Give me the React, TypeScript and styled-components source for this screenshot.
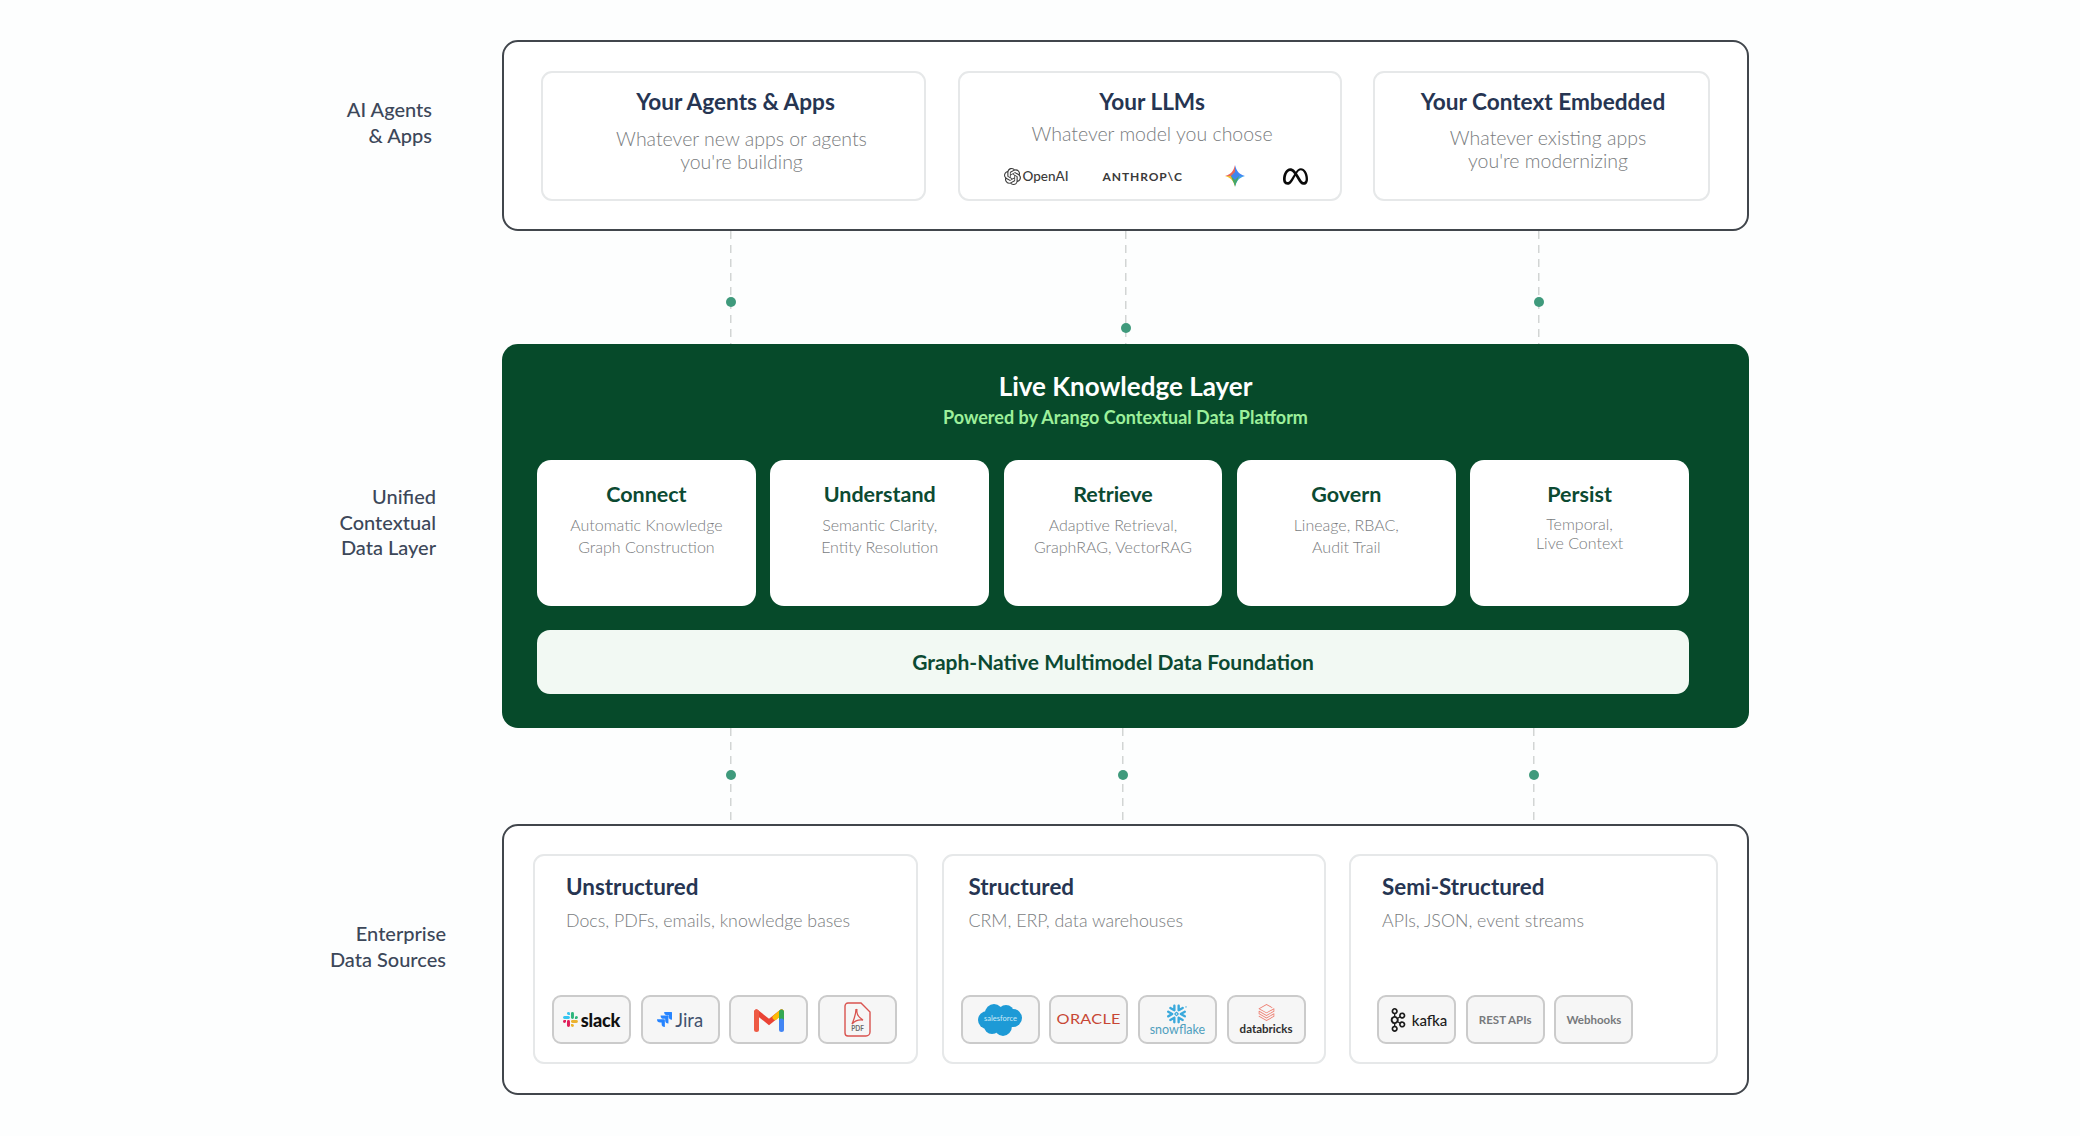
import { FC, ReactNode } from 'react'

import { SiApachekafka, SiDatabricks, SiJira, SiMeta, SiOpenai, SiSnowflake } from 'react-icons/si'
import styled, { createGlobalStyle } from 'styled-components'

const GlobalStyle = createGlobalStyle`
	html, body {
		margin: 0;
		padding: 0;
		background: #fdfefe;
		font-family: 'Lato', 'Noto Sans', sans-serif;
	}

	* {
		box-sizing: border-box;
	}
`

const Page = styled.div`
	width: 2080px;
	height: 1136px;
	padding-top: 40px;
	overflow: hidden;
`

const Tier = styled.div`
	display: flex;
`

const TierLabel = styled.div<{ $right: number; $top: number }>`
	width: 502px;
	padding-right: ${({ $right }) => $right}px;
	padding-top: ${({ $top }) => $top}px;
	text-align: right;
	color: #3c4759;
	font-size: 20px;
	font-weight: 500;
	line-height: 25.5px;
`

const OutlinePanel = styled.div<{ $height: number }>`
	width: 1247px;
	height: ${({ $height }) => $height}px;
	border: 2px solid #41464c;
	border-radius: 16px;
	background: #fff;
	display: grid;
`

const TopPanel = styled(OutlinePanel)`
	grid-template-columns: 385px 384px 337px;
	column-gap: 31.5px;
	padding: 29px 0 28px 37px;
`

const BottomPanel = styled(OutlinePanel)`
	grid-template-columns: 385px 384px 369px;
	column-gap: 23.5px;
	padding: 28px 0 29px 29px;
`

const TopCard = styled.div`
	border: 2px solid #e6e8e9;
	border-radius: 11px;
	background: #fff;
	padding-top: 15px;
	text-align: center;
`

const TopTitle = styled.div<{ $inset: number }>`
	padding-left: ${({ $inset }) => $inset}px;
	color: #263552;
	font-size: 22.6px;
	font-weight: 700;
	line-height: 28px;
`

const TopDesc = styled.div<{ $inset: number; $gap: number }>`
	margin-top: ${({ $gap }) => $gap}px;
	padding-left: ${({ $inset }) => $inset}px;
	color: #797c7e;
	font-size: 19.5px;
	font-weight: 300;
	line-height: 23px;
`

const LogoRow = styled.div`
	display: flex;
	align-items: center;
	height: 20px;
	margin-top: 21px;
	padding-left: 44px;
`

const OpenAiLogo = styled.div`
	display: flex;
	align-items: center;
	gap: 2px;
	color: #3a3a3a;
	font-size: 13.5px;
	font-weight: 500;
`

const AnthropicLogo = styled.div`
	margin-left: 34px;
	color: #3a3a3a;
	font-size: 12px;
	font-weight: 700;
	letter-spacing: 0.9px;
`

const ConnectorRow = styled.div<{ $columns: string; $height: number }>`
	margin-left: 502px;
	padding-left: 228px;
	height: ${({ $height }) => $height}px;
	display: grid;
	grid-template-columns: ${({ $columns }) => $columns};
`

const Connector = styled.div`
	position: relative;
	background-image: repeating-linear-gradient(to bottom, #d2d5d4 0 8px, transparent 8px 14px);
	background-size: 1.5px 100%;
	background-repeat: no-repeat;
`

const ConnectorDot = styled.span<{ $top: number }>`
	position: absolute;
	top: ${({ $top }) => $top}px;
	left: -4px;
	width: 10px;
	height: 10px;
	border-radius: 50%;
	background: #3f9a7c;
`

const GreenPanel = styled.div`
	width: 1247px;
	height: 384px;
	padding: 27px 0 0 35px;
	border-radius: 16px;
	background: #064a2a;
`

const GreenHeader = styled.div`
	width: 1177px;
	text-align: center;
`

const GreenTitle = styled.div`
	color: #fff;
	font-size: 26px;
	font-weight: 700;
	line-height: 30px;
`

const GreenSubtitle = styled.div`
	margin-top: 5px;
	color: #9df09b;
	font-size: 18px;
	font-weight: 700;
	line-height: 22px;
`

const CapabilityGrid = styled.div`
	width: 1152px;
	margin-top: 32px;
	display: grid;
	grid-template-columns: repeat(5, 1fr);
	column-gap: 14.5px;
`

const CapabilityCard = styled.div`
	height: 146px;
	padding-top: 21px;
	border-radius: 14px;
	background: #fff;
	text-align: center;
`

const CapabilityTitle = styled.div`
	color: #0c4a32;
	font-size: 21.5px;
	font-weight: 700;
	line-height: 26px;
`

const CapabilityDesc = styled.div<{ $tight?: boolean }>`
	margin-top: 7px;
	color: #797c7e;
	font-size: 16px;
	font-weight: 300;
	line-height: ${({ $tight }) => ($tight ? 19 : 22)}px;
`

const FoundationBar = styled.div`
	width: 1152px;
	height: 64px;
	margin-top: 24px;
	padding-bottom: 1px;
	display: flex;
	align-items: center;
	justify-content: center;
	border-radius: 13px;
	background: #f2f9f3;
	color: #0c4a32;
	font-size: 21px;
	font-weight: 700;
`

const SourceCard = styled.div<{ $chipInset: number }>`
	display: flex;
	flex-direction: column;
	padding: 17px 0 18px ${({ $chipInset }) => $chipInset}px;
	border: 2px solid #e6e8e9;
	border-radius: 11px;
	background: #fff;
`

const SourceTitle = styled.div<{ $inset: number }>`
	padding-left: ${({ $inset }) => $inset}px;
	color: #263552;
	font-size: 22.4px;
	font-weight: 700;
	line-height: 28px;
`

const SourceDesc = styled.div<{ $inset: number }>`
	margin-top: 7px;
	padding-left: ${({ $inset }) => $inset}px;
	color: #797c7e;
	font-size: 17.8px;
	font-weight: 300;
	line-height: 24px;
`

const ChipRow = styled.div`
	margin-top: auto;
	display: flex;
	gap: 9.7px;
`

const Chip = styled.div`
	width: 79px;
	height: 49px;
	display: flex;
	flex-direction: column;
	align-items: center;
	justify-content: center;
	border: 2px solid #cbcbcb;
	border-radius: 9px;
	background: #f6f6f6;
`

const ChipInline = styled.div<{ $gap?: number }>`
	display: flex;
	align-items: center;
	gap: ${({ $gap }) => $gap ?? 3}px;
`

const SlackWord = styled.span`
	color: #111;
	font-size: 18px;
	font-weight: 900;
	letter-spacing: -0.2px;
`

const JiraWord = styled.span`
	color: #42526e;
	font-size: 18.5px;
	font-weight: 400;
`

const OracleWord = styled.span`
	color: #c74634;
	font-size: 12.5px;
	font-weight: 400;
	letter-spacing: 0.2px;
	transform: scaleX(1.3);
`

const SnowflakeWord = styled.span`
	margin-top: -1px;
	color: #4f9fbe;
	font-size: 12.5px;
	font-weight: 400;
	line-height: 13px;
`

const DatabricksWord = styled.span`
	margin-top: 1px;
	color: #2e2e2e;
	font-size: 11.5px;
	font-weight: 700;
	line-height: 13px;
`

const KafkaWord = styled.span`
	color: #1c1c1c;
	font-size: 15px;
	font-weight: 500;
`

const PlainChipWord = styled.span`
	color: #77797c;
	font-size: 11.5px;
	font-weight: 700;
`

const GeminiIcon: FC = () => (
	<svg width="20" height="22" viewBox="0 0 20 22" style={{ marginLeft: 42 }}>
		<defs>
			<clipPath id="gemini-star">
				<path d="M10 0C11.5 6 13.5 9 20 11 13.5 13 11.5 16 10 22 8.5 16 6.5 13 0 11 6.5 9 8.5 6 10 0Z" />
			</clipPath>
		</defs>
		<g clipPath="url(#gemini-star)">
			<rect x="0" y="0" width="10" height="11" fill="#e8665a" />
			<rect x="10" y="0" width="10" height="11" fill="#4285f4" />
			<rect x="0" y="11" width="10" height="11" fill="#f2bd2c" />
			<rect x="10" y="11" width="10" height="11" fill="#3fa0e8" />
			<path d="M10 22 6 11h8Z" fill="#47a868" />
			<path d="M10 7 14 11 10 15 6 11Z" fill="#3f86ee" />
		</g>
	</svg>
)

const SlackIcon: FC = () => (
	<svg width="15" height="15" viewBox="0 0 54 54">
		<path
			fill="#36C5F0"
			d="M19.712.133a5.381 5.381 0 0 0-5.376 5.387 5.381 5.381 0 0 0 5.376 5.386h5.376V5.52A5.381 5.381 0 0 0 19.712.133m0 14.365H5.376A5.381 5.381 0 0 0 0 19.884a5.381 5.381 0 0 0 5.376 5.387h14.336a5.381 5.381 0 0 0 5.376-5.387 5.381 5.381 0 0 0-5.376-5.386"
		/>
		<path
			fill="#2EB67D"
			d="M53.76 19.884a5.381 5.381 0 0 0-5.376-5.386 5.381 5.381 0 0 0-5.376 5.386v5.387h5.376a5.381 5.381 0 0 0 5.376-5.387m-14.336 0V5.52A5.381 5.381 0 0 0 34.048.133a5.381 5.381 0 0 0-5.376 5.387v14.364a5.381 5.381 0 0 0 5.376 5.387 5.381 5.381 0 0 0 5.376-5.387"
		/>
		<path
			fill="#ECB22E"
			d="M34.048 54a5.381 5.381 0 0 0 5.376-5.387 5.381 5.381 0 0 0-5.376-5.386h-5.376v5.386A5.381 5.381 0 0 0 34.048 54m0-14.365h14.336a5.381 5.381 0 0 0 5.376-5.386 5.381 5.381 0 0 0-5.376-5.387H34.048a5.381 5.381 0 0 0-5.376 5.387 5.381 5.381 0 0 0 5.376 5.386"
		/>
		<path
			fill="#E01E5A"
			d="M0 34.249a5.381 5.381 0 0 0 5.376 5.386 5.381 5.381 0 0 0 5.376-5.386v-5.387H5.376A5.381 5.381 0 0 0 0 34.25m14.336-.001v14.364A5.381 5.381 0 0 0 19.712 54a5.381 5.381 0 0 0 5.376-5.387V34.25a5.381 5.381 0 0 0-5.376-5.387 5.381 5.381 0 0 0-5.376 5.387"
		/>
	</svg>
)

const GmailIcon: FC = () => (
	<svg width="30" height="24" viewBox="0 0 30 24">
		<path d="M2.5 4 15 14 27.5 4" fill="none" stroke="#ea4335" strokeWidth="5" strokeLinecap="round" />
		<path d="M2.5 4V21.5" fill="none" stroke="#ee5a44" strokeWidth="5" strokeLinecap="round" />
		<path d="M21 9.5 27.5 4" fill="none" stroke="#fbbc04" strokeWidth="5" strokeLinecap="round" />
		<path d="M27.5 4V13" fill="none" stroke="#34a853" strokeWidth="5" strokeLinecap="round" />
		<path d="M27.5 13V21.5" fill="none" stroke="#4285f4" strokeWidth="5" strokeLinecap="round" />
	</svg>
)

const PdfIcon: FC = () => (
	<svg width="27" height="35" viewBox="0 0 27 35">
		<path
			d="M4 1h13l9 9v20a4 4 0 0 1-4 4H4a3 3 0 0 1-3-3V4a3 3 0 0 1 3-3Z"
			fill="none"
			stroke="#d9534f"
			strokeWidth="1.4"
		/>
		<path
			d="M13 7c-1 5 1 8 6 11-4-.5-8 .5-11 4 2-5 4-9 4-15"
			fill="none"
			stroke="#d9534f"
			strokeWidth="1.3"
		/>
		<text x="13.5" y="29" textAnchor="middle" fontSize="6.5" fontWeight="700" fill="#6a6a6a">
			PDF
		</text>
	</svg>
)

const SalesforceIcon: FC = () => (
	<svg width="44" height="32" viewBox="0 0 44 32">
		<g fill="#1d9ad6">
			<ellipse cx="9" cy="16" rx="9" ry="9" />
			<ellipse cx="16" cy="9" rx="9" ry="9" />
			<ellipse cx="28" cy="9" rx="8" ry="8" />
			<ellipse cx="35" cy="14" rx="9" ry="9" />
			<ellipse cx="25" cy="22" rx="9" ry="10" />
			<ellipse cx="14" cy="22" rx="8" ry="8" />
			<rect x="9" y="9" width="26" height="14" />
		</g>
		<text x="22.5" y="17" textAnchor="middle" fontSize="7.5" fill="#cdeaf6">
			salesforce
		</text>
	</svg>
)

type TierConnectorsProps = {
	columns: string
	height: number
	dots: number[]
}

const TierConnectors: FC<TierConnectorsProps> = ({ columns, height, dots }) => (
	<ConnectorRow $columns={columns} $height={height}>
		{dots.map((top, i) => (
			<Connector key={i}>
				<ConnectorDot $top={top} />
			</Connector>
		))}
	</ConnectorRow>
)

const capabilities = [
	{ title: 'Connect', lines: ['Automatic Knowledge', 'Graph Construction'] },
	{ title: 'Understand', lines: ['Semantic Clarity,', 'Entity Resolution'] },
	{ title: 'Retrieve', lines: ['Adaptive Retrieval,', 'GraphRAG, VectorRAG'] },
	{ title: 'Govern', lines: ['Lineage, RBAC,', 'Audit Trail'] },
	{ title: 'Persist', lines: ['Temporal,', 'Live Context'], tight: true },
]

type SourceProps = {
	title: string
	desc: string
	chipInset: number
	textInset: number
	children: ReactNode
}

const Source: FC<SourceProps> = ({ title, desc, chipInset, textInset, children }) => (
	<SourceCard $chipInset={chipInset}>
		<SourceTitle $inset={textInset}>{title}</SourceTitle>
		<SourceDesc $inset={textInset}>{desc}</SourceDesc>
		<ChipRow>{children}</ChipRow>
	</SourceCard>
)

const App: FC = () => (
	<Page>
		<GlobalStyle />
		<Tier>
			<TierLabel $right={70} $top={57}>
				AI Agents
				<br />& Apps
			</TierLabel>
			<TopPanel $height={191}>
				<TopCard>
					<TopTitle $inset={4}>Your Agents &amp; Apps</TopTitle>
					<TopDesc $inset={16} $gap={11}>
						Whatever new apps or agents
						<br />
						you're building
					</TopDesc>
				</TopCard>
				<TopCard>
					<TopTitle $inset={5}>Your LLMs</TopTitle>
					<TopDesc $inset={5} $gap={6}>
						Whatever model you choose
					</TopDesc>
					<LogoRow>
						<OpenAiLogo>
							<SiOpenai size={17} />
							OpenAI
						</OpenAiLogo>
						<AnthropicLogo>ANTHROP\C</AnthropicLogo>
						<GeminiIcon />
						<SiMeta size={25} color="#0a0a0a" style={{ marginLeft: 38 }} />
					</LogoRow>
				</TopCard>
				<TopCard>
					<TopTitle $inset={3}>Your Context Embedded</TopTitle>
					<TopDesc $inset={13} $gap={10}>
						Whatever existing apps
						<br />
						you're modernizing
					</TopDesc>
				</TopCard>
			</TopPanel>
		</Tier>
		<TierConnectors columns="395px 413px auto" height={113} dots={[66, 92, 66]} />
		<Tier>
			<TierLabel $right={66} $top={140}>
				Unified
				<br />
				Contextual
				<br />
				Data Layer
			</TierLabel>
			<GreenPanel>
				<GreenHeader>
					<GreenTitle>Live Knowledge Layer</GreenTitle>
					<GreenSubtitle>Powered by Arango Contextual Data Platform</GreenSubtitle>
				</GreenHeader>
				<CapabilityGrid>
					{capabilities.map((item) => (
						<CapabilityCard key={item.title}>
							<CapabilityTitle>{item.title}</CapabilityTitle>
							<CapabilityDesc $tight={item.tight}>
								{item.lines[0]}
								<br />
								{item.lines[1]}
							</CapabilityDesc>
						</CapabilityCard>
					))}
				</CapabilityGrid>
				<FoundationBar>Graph-Native Multimodel Data Foundation</FoundationBar>
			</GreenPanel>
		</Tier>
		<TierConnectors columns="392px 411px auto" height={96} dots={[42, 42, 42]} />
		<Tier>
			<TierLabel $right={56} $top={97}>
				Enterprise
				<br />
				Data Sources
			</TierLabel>
			<BottomPanel $height={271}>
				<Source title="Unstructured" desc="Docs, PDFs, emails, knowledge bases" chipInset={17} textInset={14}>
					<Chip>
						<ChipInline>
							<SlackIcon />
							<SlackWord>slack</SlackWord>
						</ChipInline>
					</Chip>
					<Chip>
						<ChipInline>
							<SiJira size={15} color="#2684ff" />
							<JiraWord>Jira</JiraWord>
						</ChipInline>
					</Chip>
					<Chip>
						<GmailIcon />
					</Chip>
					<Chip>
						<PdfIcon />
					</Chip>
				</Source>
				<Source title="Structured" desc="CRM, ERP, data warehouses" chipInset={17} textInset={8}>
					<Chip>
						<SalesforceIcon />
					</Chip>
					<Chip>
						<OracleWord>ORACLE</OracleWord>
					</Chip>
					<Chip>
						<SiSnowflake size={20} color="#3aa9dc" />
						<SnowflakeWord>snowflake</SnowflakeWord>
					</Chip>
					<Chip>
						<SiDatabricks size={17} color="#ee7f72" />
						<DatabricksWord>databricks</DatabricksWord>
					</Chip>
				</Source>
				<Source title="Semi-Structured" desc="APIs, JSON, event streams" chipInset={26} textInset={5}>
					<Chip>
						<ChipInline $gap={2}>
							<SiApachekafka size={24} color="#1c1c1c" />
							<KafkaWord>kafka</KafkaWord>
						</ChipInline>
					</Chip>
					<Chip>
						<PlainChipWord>REST APIs</PlainChipWord>
					</Chip>
					<Chip>
						<PlainChipWord>Webhooks</PlainChipWord>
					</Chip>
				</Source>
			</BottomPanel>
		</Tier>
	</Page>
)

export default App
